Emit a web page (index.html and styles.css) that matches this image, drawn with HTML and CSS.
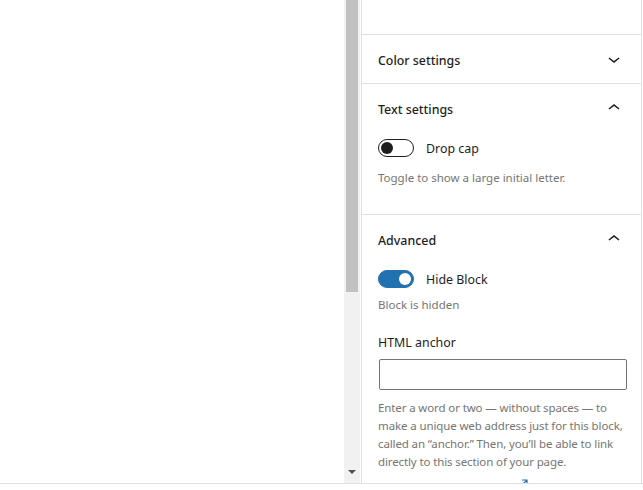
FILE: index.html
```html
<!DOCTYPE html>
<html>
<head>
<meta charset="utf-8">
<link rel="stylesheet" href="styles.css">
</head>
<body>
<div class="app">
  <div class="main">
    <div class="canvas"></div>
    <div class="scrollbar">
      <div class="thumb"></div>
      <div class="arrow-down"></div>
    </div>
    <div class="gap"></div>
    <aside class="sidebar">
      <div class="top"></div>
      <section class="panel">
        <div class="panel-head">
          <span class="panel-title">Color settings</span>
          <svg class="chev" width="24" height="24" viewBox="0 0 24 24"><path d="M17.5 11.6L12 16l-5.5-4.4.9-1.2L12 14l4.6-3.6 1 1.2z"/></svg>
        </div>
      </section>
      <section class="panel">
        <div class="panel-head">
          <span class="panel-title">Text settings</span>
          <svg class="chev" width="24" height="24" viewBox="0 0 24 24"><path d="M6.5 12.4L12 8l5.5 4.4-.9 1.2L12 10l-4.6 3.6-1-1.2z"/></svg>
        </div>
        <div class="panel-body body-text">
          <div class="toggle-row">
            <span class="toggle"><span class="knob"></span></span>
            <span class="toggle-label">Drop cap</span>
          </div>
          <p class="help help-drop">Toggle to show a large initial letter.</p>
        </div>
      </section>
      <section class="panel">
        <div class="panel-head">
          <span class="panel-title">Advanced</span>
          <svg class="chev" width="24" height="24" viewBox="0 0 24 24"><path d="M6.5 12.4L12 8l5.5 4.4-.9 1.2L12 10l-4.6 3.6-1-1.2z"/></svg>
        </div>
        <div class="panel-body body-adv">
          <div class="toggle-row">
            <span class="toggle on"><span class="knob"></span></span>
            <span class="toggle-label">Hide Block</span>
          </div>
          <p class="help help-hidden">Block is hidden</p>
          <label class="field-label">HTML anchor</label>
          <input class="text-input" type="text">
          <p class="help help-anchor">Enter a word or two — without spaces — to make a unique web address just for this block, called an “anchor.” Then, you’ll be able to link directly to this section of your page.</p>
          <div class="more">
            <svg class="ext" width="10" height="10" viewBox="0 0 10 10"><path d="M4 1h5v5M9 1L4 6" fill="none" stroke="#2271b1" stroke-width="1.2"/></svg>
          </div>
        </div>
      </section>
    </aside>
    <div class="edge"></div>
  </div>
  <div class="footer"></div>
</div>
</body>
</html>
```
FILE: styles.css
```css
html, body {
  margin: 0;
  padding: 0;
  background: #fff;
  font-family: "Noto Sans", "Open Sans", sans-serif;
  color: #1e1e1e;
  overflow: hidden;
}
.app {
  width: 643px;
  height: 490px;
  display: flex;
  flex-direction: column;
}
.main {
  height: 483px;
  display: flex;
  overflow: hidden;
}
.canvas {
  width: 344px;
  flex: none;
}
.scrollbar {
  width: 16px;
  flex: none;
  background: #f1f1f1;
  display: flex;
  flex-direction: column;
  align-items: center;
  justify-content: space-between;
}
.thumb {
  width: 12px;
  height: 292px;
  background: #c1c1c1;
}
.arrow-down {
  width: 0;
  height: 0;
  border-left: 4px solid transparent;
  border-right: 4px solid transparent;
  border-top: 4px solid #505050;
  margin-bottom: 9px;
}
.gap {
  width: 1px;
  flex: none;
}
.sidebar {
  width: 279px;
  flex: none;
  border-left: 1px solid #e0e0e0;
  border-right: 1px solid #e0e0e0;
  overflow: hidden;
}
.edge {
  flex: 1;
}
.top {
  height: 34px;
  border-bottom: 1px solid #e0e0e0;
}
.panel {
  border-bottom: 1px solid #e0e0e0;
}
.panel-head {
  box-sizing: border-box;
  height: 48px;
  padding: 2px 15px 0 16px;
  display: flex;
  align-items: center;
  justify-content: space-between;
}
.panel-title {
  font-size: 12.4px;
  font-weight: 500;
}
.chev {
  fill: #1e1e1e;
  margin-top: -2px;
}
.panel-body {
  padding: 7px 16px 0;
}
.body-text {
  padding-bottom: 27px;
}
.body-adv {
  padding-bottom: 40px;
}
.toggle-row {
  display: flex;
  align-items: center;
  height: 18px;
}
.toggle {
  box-sizing: border-box;
  width: 36px;
  height: 18px;
  border: 1px solid #1e1e1e;
  border-radius: 9px;
  position: relative;
  background: #fff;
}
.toggle .knob {
  position: absolute;
  top: 2px;
  left: 2px;
  width: 12px;
  height: 12px;
  border-radius: 50%;
  background: #1e1e1e;
}
.toggle.on {
  background: #2271b1;
  border-color: #2271b1;
}
.toggle.on .knob {
  left: 20px;
  background: #fff;
}
.toggle-label {
  margin-left: 12px;
  font-size: 12.4px;
}
.help {
  margin: 0;
  font-size: 11.5px;
  line-height: 18px;
  color: #757575;
}
.help-drop {
  margin-top: 12px;
}
.help-hidden {
  margin-top: 8px;
}
.field-label {
  display: block;
  margin-top: 20px;
  font-size: 12.4px;
  line-height: 18px;
}
.text-input {
  display: block;
  box-sizing: border-box;
  margin: 7px 0 0 1px;
  width: 248px;
  height: 31px;
  border: 1px solid #757575;
  border-radius: 2px;
  background: #fff;
}
.help-anchor {
  margin-top: 9px;
  line-height: 18px;
  letter-spacing: -0.12px;
}
.more {
  display: flex;
  padding-left: 140px;
  margin-top: 8px;
}
.footer {
  height: 6px;
  border-top: 1px solid #e0e0e0;
}
```
